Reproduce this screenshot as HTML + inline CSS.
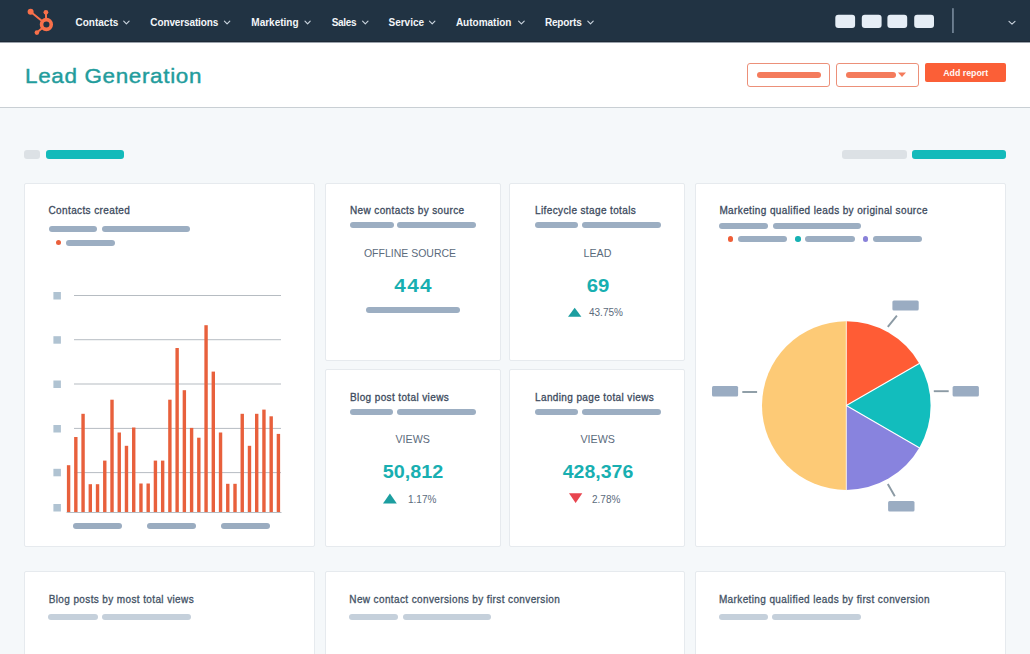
<!DOCTYPE html>
<html><head><meta charset="utf-8">
<style>
*{box-sizing:border-box;margin:0;padding:0}
html,body{width:1030px;height:654px;overflow:hidden;background:#F5F8FA;font-family:"Liberation Sans",sans-serif}
.a{position:absolute}
.t{position:absolute;white-space:nowrap;line-height:1}
#nav{position:absolute;left:0;top:0;width:1030px;height:42px;background:#213343;border-bottom:1px solid #1C2836}
.ni{position:absolute;top:17.5px;font-weight:bold;font-size:10px;color:#F3F6F9;line-height:1;white-space:nowrap}
.chev{position:absolute;top:20px;width:7px;height:4px}
#hdr{position:absolute;left:0;top:43px;width:1030px;height:65px;background:#fff;border-bottom:1px solid #C9CFD4}
.card{position:absolute;background:#fff;border:1px solid #E6EAEE;border-radius:2px}
.ttl{position:absolute;font-size:10px;color:#3D4B5E;line-height:1;white-space:nowrap;letter-spacing:0.38px;-webkit-text-stroke:0.3px #3D4B5E}
.pb{position:absolute;height:6px;border-radius:3px;background:#9CAEC2}
.lbl{position:absolute;font-size:10.7px;color:#5B6B7C;line-height:1;white-space:nowrap;text-align:center;width:200px}
.big{position:absolute;font-weight:bold;font-size:18.5px;color:#18AFB1;line-height:1;white-space:nowrap;text-align:center;width:200px;transform-origin:100px 0}
.pct{position:absolute;font-size:10px;color:#5B6B7C;line-height:1;white-space:nowrap}
</style></head><body>

<div id="nav">
  <svg class="a" style="left:0;top:0" width="70" height="42" viewBox="0 0 70 42">
    <g fill="#F8704A" stroke="#F8704A" stroke-linecap="round">
      <line x1="30.6" y1="11.7" x2="42" y2="21" stroke-width="2"/>
      <line x1="36.9" y1="32.6" x2="42" y2="28.2" stroke-width="2"/>
      <line x1="45.9" y1="12.3" x2="46.1" y2="19" stroke-width="2"/>
      <circle cx="30.6" cy="11.7" r="3" stroke="none"/>
      <circle cx="45.9" cy="12.3" r="2.4" stroke="none"/>
      <circle cx="36.9" cy="32.6" r="2.3" stroke="none"/>
      <circle cx="46.4" cy="24.5" r="4.85" fill="none" stroke-width="3.6"/>
    </g>
  </svg>
  <div class="ni" style="left:75.5px">Contacts</div>
  <div class="ni" style="left:150.3px;letter-spacing:-0.12px">Conversations</div>
  <div class="ni" style="left:251.3px">Marketing</div>
  <div class="ni" style="left:331.7px;letter-spacing:-0.3px">Sales</div>
  <div class="ni" style="left:388.5px">Service</div>
  <div class="ni" style="left:455.9px">Automation</div>
  <div class="ni" style="left:544.9px;letter-spacing:-0.15px">Reports</div>
  <svg class="a" style="left:0;top:0" width="1030" height="42" viewBox="0 0 1030 42">
    <g fill="none" stroke="#C9D3DD" stroke-width="1.15" stroke-linecap="round" stroke-linejoin="round">
      <polyline points="123.7,21.2 126.4,23.9 129.1,21.2"/>
      <polyline points="224.4,21.2 227.1,23.9 229.8,21.2"/>
      <polyline points="305.0,21.2 307.6,23.9 310.2,21.2"/>
      <polyline points="362.6,21.2 365.3,23.9 368.0,21.2"/>
      <polyline points="429.5,21.2 432.2,23.9 434.9,21.2"/>
      <polyline points="518.6,21.2 521.4,23.9 524.2,21.2"/>
      <polyline points="587.8,21.2 590.5,23.9 593.2,21.2"/>
      <polyline points="1009.0,21.4 1012.0,24.1 1015.0,21.4"/>
    </g>
    <g fill="#E6EEF6">
      <rect x="835.3" y="14.7" width="19.8" height="13.4" rx="3"/>
      <rect x="861.8" y="14.7" width="19.8" height="13.4" rx="3"/>
      <rect x="887.4" y="14.7" width="19.8" height="13.4" rx="3"/>
      <rect x="914.2" y="14.7" width="19.8" height="13.4" rx="3"/>
    </g>
    <rect x="952.3" y="8.2" width="1.3" height="24.8" fill="#8D9FB1"/>
  </svg>
</div>

<div class="a" style="left:0;top:42px;width:1030px;height:1px;background:#9AA2AB"></div>
<div id="hdr">
  <div class="t" style="left:24.5px;top:22.5px;font-size:20.8px;letter-spacing:0.6px;transform:scaleX(1.08);transform-origin:0 0;color:#229C9C;-webkit-text-stroke:0.4px #229C9C">Lead Generation</div>
  <div class="a" style="left:747px;top:20px;width:83px;height:24px;border:1.6px solid #EC9079;border-radius:3px"></div>
  <div class="a" style="left:757px;top:29px;width:64px;height:6px;border-radius:3px;background:#F47B5C"></div>
  <div class="a" style="left:836px;top:20px;width:83px;height:24px;border:1.6px solid #EC9079;border-radius:3px"></div>
  <div class="a" style="left:846px;top:29px;width:50px;height:6px;border-radius:3px;background:#F47B5C"></div>
  <svg class="a" style="left:897px;top:29px" width="10" height="6"><polygon points="1,0.6 9,0.6 5,5" fill="#F47B5C"/></svg>
  <div class="a" style="left:925px;top:20px;width:81px;height:19px;border-radius:2px;background:#FB5F37"></div>
  <div class="t" style="left:943.2px;top:25.6px;font-size:8.8px;font-weight:bold;color:#FFF8F5">Add report</div>
</div>

<div class="a" style="left:24px;top:150px;width:16px;height:9px;border-radius:3px;background:#DCE1E5"></div>
<div class="a" style="left:46px;top:150px;width:78px;height:9px;border-radius:3px;background:#13BABA"></div>
<div class="a" style="left:842px;top:150px;width:65px;height:9px;border-radius:3px;background:#DCE1E5"></div>
<div class="a" style="left:912px;top:150px;width:94px;height:9px;border-radius:3px;background:#13BABA"></div>

<!-- cards -->
<div class="card" style="left:24px;top:183px;width:291px;height:364px"></div>
<div class="card" style="left:325px;top:183px;width:176px;height:178px"></div>
<div class="card" style="left:509px;top:183px;width:176px;height:178px"></div>
<div class="card" style="left:325px;top:369px;width:176px;height:178px"></div>
<div class="card" style="left:509px;top:369px;width:176px;height:178px"></div>
<div class="card" style="left:695px;top:183px;width:311px;height:364px"></div>
<div class="card" style="left:24px;top:571px;width:291px;height:100px"></div>
<div class="card" style="left:325px;top:571px;width:360px;height:100px"></div>
<div class="card" style="left:695px;top:571px;width:311px;height:100px"></div>

<!-- card A -->
<div class="ttl" style="left:48.5px;top:206px">Contacts created</div>
<div class="pb" style="left:49px;top:226px;width:48px"></div>
<div class="pb" style="left:102px;top:226px;width:88px"></div>
<div class="a" style="left:55.8px;top:239.7px;width:5.6px;height:5.6px;border-radius:50%;background:#EA5F3B"></div>
<div class="pb" style="left:66px;top:240px;width:49px"></div>
<svg class="a" style="left:0;top:0" width="1030" height="654" viewBox="0 0 1030 654">
  <g fill="#B6BCC2"><rect x="74" y="295.0" width="207" height="1"/>
<rect x="74" y="339.2" width="207" height="1"/>
<rect x="74" y="383.5" width="207" height="1"/>
<rect x="74" y="427.9" width="207" height="1"/>
<rect x="74" y="472.1" width="207" height="1"/>
  <rect x="66.5" y="512" width="215" height="1"/></g>
  <g fill="#B0C3D2"><rect x="53.4" y="292" width="7.5" height="7.5"/>
<rect x="53.4" y="336.2" width="7.5" height="7.5"/>
<rect x="53.4" y="380.5" width="7.5" height="7.5"/>
<rect x="53.4" y="425" width="7.5" height="7.5"/>
<rect x="53.4" y="468.8" width="7.5" height="7.5"/>
<rect x="53.4" y="504" width="7.5" height="7.5"/></g>
  <g fill="#E8603C"><rect x="66.90" y="465.2" width="3.4" height="46.8"/>
<rect x="74.13" y="437.0" width="3.4" height="75.0"/>
<rect x="81.37" y="413.8" width="3.4" height="98.2"/>
<rect x="88.60" y="484.2" width="3.4" height="27.8"/>
<rect x="95.84" y="484.2" width="3.4" height="27.8"/>
<rect x="103.08" y="460.6" width="3.4" height="51.4"/>
<rect x="110.31" y="399.7" width="3.4" height="112.3"/>
<rect x="117.55" y="432.5" width="3.4" height="79.5"/>
<rect x="124.78" y="445.8" width="3.4" height="66.2"/>
<rect x="132.02" y="427.5" width="3.4" height="84.5"/>
<rect x="139.25" y="483.5" width="3.4" height="28.5"/>
<rect x="146.49" y="483.5" width="3.4" height="28.5"/>
<rect x="153.72" y="460.6" width="3.4" height="51.4"/>
<rect x="160.96" y="460.6" width="3.4" height="51.4"/>
<rect x="168.19" y="399.7" width="3.4" height="112.3"/>
<rect x="175.43" y="348.0" width="3.4" height="164.0"/>
<rect x="182.66" y="390.2" width="3.4" height="121.8"/>
<rect x="189.90" y="427.9" width="3.4" height="84.1"/>
<rect x="197.13" y="437.7" width="3.4" height="74.3"/>
<rect x="204.37" y="325.2" width="3.4" height="186.8"/>
<rect x="211.60" y="371.6" width="3.4" height="140.4"/>
<rect x="218.84" y="432.5" width="3.4" height="79.5"/>
<rect x="226.07" y="483.8" width="3.4" height="28.2"/>
<rect x="233.31" y="483.8" width="3.4" height="28.2"/>
<rect x="240.54" y="413.8" width="3.4" height="98.2"/>
<rect x="247.78" y="445.8" width="3.4" height="66.2"/>
<rect x="255.01" y="413.8" width="3.4" height="98.2"/>
<rect x="262.25" y="409.6" width="3.4" height="102.4"/>
<rect x="269.48" y="416.3" width="3.4" height="95.7"/>
<rect x="276.71" y="433.9" width="3.4" height="78.1"/></g>
  <g fill="#9AACC0">
    <rect x="73" y="523" width="49" height="6" rx="3"/>
    <rect x="147" y="523" width="49" height="6" rx="3"/>
    <rect x="221" y="523" width="49" height="6" rx="3"/>
  </g>
</svg>

<!-- B1 -->
<div class="ttl" style="left:350px;top:206px">New contacts by source</div>
<div class="pb" style="left:350px;top:222px;width:43.5px"></div>
<div class="pb" style="left:397.3px;top:222px;width:78.7px"></div>
<div class="lbl" style="left:310px;top:247.5px;font-size:10.5px">OFFLINE SOURCE</div>
<div class="big" style="left:312.5px;top:277px;letter-spacing:1.2px;text-indent:1.2px;transform:scaleX(1.12)">444</div>
<div class="pb" style="left:366px;top:307px;width:93.5px"></div>

<!-- C1 -->
<div class="ttl" style="left:535px;top:206px">Lifecycle stage totals</div>
<div class="pb" style="left:535px;top:222px;width:43px"></div>
<div class="pb" style="left:582.3px;top:222px;width:78.4px"></div>
<div class="lbl" style="left:497.5px;top:247.5px">LEAD</div>
<div class="big" style="left:497.6px;top:277px;transform:scaleX(1.1)">69</div>
<svg class="a" style="left:567px;top:307px" width="16" height="11"><polygon points="1,9.7 14.4,9.7 7.7,0.7" fill="#1C9EA0"/></svg>
<div class="pct" style="left:589px;top:308px">43.75%</div>

<!-- B2 -->
<div class="ttl" style="left:350px;top:393px">Blog post total views</div>
<div class="pb" style="left:350px;top:409px;width:43.3px"></div>
<div class="pb" style="left:397.4px;top:409px;width:78.6px"></div>
<div class="lbl" style="left:312.7px;top:434.3px">VIEWS</div>
<div class="big" style="left:312.8px;top:463px;transform:scaleX(1.07)">50,812</div>
<svg class="a" style="left:382px;top:493px" width="16" height="11"><polygon points="1,10.4 14.8,10.4 7.9,0.6" fill="#1C9EA0"/></svg>
<div class="pct" style="left:408px;top:495px">1.17%</div>

<!-- C2 -->
<div class="ttl" style="left:535px;top:393px">Landing page total views</div>
<div class="pb" style="left:535px;top:409px;width:43.3px"></div>
<div class="pb" style="left:582.4px;top:409px;width:78.6px"></div>
<div class="lbl" style="left:497.7px;top:434.3px">VIEWS</div>
<div class="big" style="left:497.5px;top:463px;transform:scaleX(1.055)">428,376</div>
<svg class="a" style="left:567.5px;top:493px" width="16" height="11"><polygon points="1,0.2 14.3,0.2 7.6,10" fill="#E8454F"/></svg>
<div class="pct" style="left:592px;top:495px">2.78%</div>

<!-- D pie -->
<div class="ttl" style="left:719.4px;top:206px">Marketing qualified leads by original source</div>
<div class="pb" style="left:719px;top:223px;width:48.6px"></div>
<div class="pb" style="left:772.5px;top:223px;width:88.7px"></div>
<div class="a" style="left:727.7px;top:236.2px;width:5.6px;height:5.6px;border-radius:50%;background:#EF5E37"></div>
<div class="pb" style="left:737.5px;top:236.3px;width:49.5px"></div>
<div class="a" style="left:795.4px;top:236.2px;width:5.6px;height:5.6px;border-radius:50%;background:#16B1B3"></div>
<div class="pb" style="left:805.4px;top:236.3px;width:49.3px"></div>
<div class="a" style="left:862.8px;top:236.2px;width:5.6px;height:5.6px;border-radius:50%;background:#8981D9"></div>
<div class="pb" style="left:873px;top:236.3px;width:49px"></div>
<svg class="a" style="left:0;top:0" width="1030" height="654" viewBox="0 0 1030 654">
  <path d="M846.3,405.6 L846.3,489.90000000000003 A84.3,84.3 0 0 1 846.3,321.3 Z" fill="#FDCA76"/>
  <path d="M846.3,405.6 L846.3,321.3 A84.3,84.3 0 0 1 919.31,363.45 Z" fill="#FF5C35"/>
  <path d="M846.3,405.6 L919.31,363.45 A84.3,84.3 0 0 1 919.31,447.75 Z" fill="#12BDBD"/>
  <path d="M846.3,405.6 L919.31,447.75 A84.3,84.3 0 0 1 846.3,489.90000000000003 Z" fill="#8883DE"/>
  <g stroke="#fff" stroke-width="1.1">
    <line x1="846.3" y1="320.8" x2="846.3" y2="490.40000000000003" stroke="#FFF6E6" stroke-width="0.9"/>
    <line x1="846.3" y1="405.6" x2="919.71" y2="363.25"/>
    <line x1="846.3" y1="405.6" x2="919.71" y2="447.95"/>
  </g>
  <g fill="#9AACC2">
    <rect x="892.4" y="300.5" width="26.3" height="10" rx="1.5"/>
    <rect x="888.1" y="501" width="26.4" height="10.4" rx="1.5"/>
    <rect x="712" y="386" width="26.1" height="10.4" rx="1.5"/>
    <rect x="952.6" y="386" width="26.3" height="10.4" rx="1.5"/>
  </g>
  <g stroke="#8B9AA4" stroke-width="1.9">
    <line x1="887.8" y1="326.9" x2="896.9" y2="315.7"/>
    <line x1="887.8" y1="484" x2="894.8" y2="496.3"/>
    <line x1="742.3" y1="392" x2="757.1" y2="392"/>
    <line x1="933.8" y1="391.2" x2="948.7" y2="391.2"/>
  </g>
</svg>

<!-- row 3 -->
<div class="ttl" style="left:48.7px;top:594.5px;color:#4B5B6C">Blog posts by most total views</div>
<div class="pb" style="left:48.3px;top:614px;width:49.4px;background:#C5D0DB"></div>
<div class="pb" style="left:101.7px;top:614px;width:89.2px;background:#C5D0DB"></div>
<div class="ttl" style="left:349.3px;top:594.5px;color:#4B5B6C">New contact conversions by first conversion</div>
<div class="pb" style="left:349.3px;top:614px;width:48.5px;background:#C5D0DB"></div>
<div class="pb" style="left:402.5px;top:614px;width:88.5px;background:#C5D0DB"></div>
<div class="ttl" style="left:718.9px;top:594.5px;color:#4B5B6C">Marketing qualified leads by first conversion</div>
<div class="pb" style="left:719px;top:614px;width:48.7px;background:#C5D0DB"></div>
<div class="pb" style="left:772px;top:614px;width:88.6px;background:#C5D0DB"></div>

</body></html>
